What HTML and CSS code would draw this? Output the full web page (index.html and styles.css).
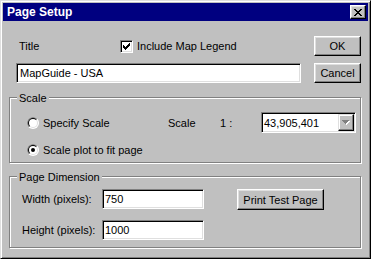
FILE: index.html
```html
<!DOCTYPE html>
<html>
<head>
<meta charset="utf-8">
<link rel="stylesheet" href="styles.css">
</head>
<body>
<div class="window">
  <div class="titlebar">
    <span class="title">Page Setup</span>
    <div class="close">
      <svg width="8" height="7" viewBox="0 0 8 7" shape-rendering="crispEdges"><path fill="#000" d="M0 0h2v1H0zM6 0h2v1H6zM1 1h2v1H1zM5 1h2v1H5zM2 2h4v1H2zM3 3h2v1H3zM2 4h4v1H2zM1 5h2v1H1zM5 5h2v1H5zM0 6h2v1H0zM6 6h2v1H6z"/></svg>
    </div>
  </div>
  <div class="content">
    <div class="top">
      <div class="top-left">
        <div class="row1">
          <span class="lbl-title">Title</span>
          <span class="check">
            <span class="checkbox">
              <svg width="7" height="7" viewBox="0 0 7 7" shape-rendering="crispEdges"><path fill="#000" d="M6 0h1v1H6zM5 1h2v1H5zM0 2h1v1H0zM4 2h3v1H4zM0 3h2v1H0zM3 3h3v1H3zM0 4h5v1H0zM1 5h3v1H1zM2 6h1v1H2z"/></svg>
            </span>
            <span>Include Map Legend</span>
          </span>
        </div>
        <div class="field">MapGuide - USA</div>
      </div>
      <div class="buttons">
        <div class="btn">OK</div>
        <div class="btn">Cancel</div>
      </div>
    </div>

    <div class="group scale">
      <span class="legend">Scale</span>
      <div class="scale-row first">
        <span class="radio-opt">
          <svg class="radio" width="12" height="12" viewBox="0 0 12 12"><defs><clipPath id="tl1"><path d="M0 0H12L0 12Z"/></clipPath></defs><circle cx="6" cy="6" r="6" fill="#fff"/><circle cx="6" cy="6" r="6" fill="#808080" clip-path="url(#tl1)"/><circle cx="6" cy="6" r="5" fill="#dfdfdf"/><circle cx="6" cy="6" r="5" fill="#000" clip-path="url(#tl1)"/><circle cx="6" cy="6" r="4" fill="#fff"/></svg>
          <span>Specify Scale</span>
        </span>
        <span>Scale</span>
        <span>1 :</span>
        <div class="combo">
          <span class="combo-text">43,905,401</span>
          <span class="drop">
            <svg width="8" height="5" viewBox="0 0 8 5" shape-rendering="crispEdges"><path fill="#fff" d="M1 1h7v1H1zM2 2h5v1H2zM3 3h3v1H3zM4 4h1v1H4z"/><path fill="#808080" d="M0 0h7v1H0zM1 1h5v1H1zM2 2h3v1H2zM3 3h1v1H3z"/></svg>
          </span>
        </div>
      </div>
      <div class="scale-row second">
        <span class="radio-opt">
          <svg class="radio" width="12" height="12" viewBox="0 0 12 12"><defs><clipPath id="tl2"><path d="M0 0H12L0 12Z"/></clipPath></defs><circle cx="6" cy="6" r="6" fill="#fff"/><circle cx="6" cy="6" r="6" fill="#808080" clip-path="url(#tl2)"/><circle cx="6" cy="6" r="5" fill="#dfdfdf"/><circle cx="6" cy="6" r="5" fill="#000" clip-path="url(#tl2)"/><circle cx="6" cy="6" r="4" fill="#fff"/><circle cx="6" cy="6" r="2" fill="#000"/></svg>
          <span>Scale plot to fit page</span>
        </span>
      </div>
    </div>

    <div class="group dim">
      <span class="legend">Page Dimension</span>
      <div class="dim-row first">
        <span>Width (pixels):</span>
        <div class="field small">750</div>
        <span></span>
        <div class="btn wide">Print Test Page</div>
      </div>
      <div class="dim-row second">
        <span>Height (pixels):</span>
        <div class="field small">1000</div>
      </div>
    </div>
  </div>
</div>
</body>
</html>
```

FILE: styles.css
```css
* { box-sizing: border-box; }

body {
  margin: 0;
  background: #c0c0c0;
  font: 11px "Liberation Sans", Arial, sans-serif;
  color: #000;
}

.window {
  width: 371px;
  height: 259px;
  background: #c0c0c0;
  border: 1px solid;
  border-color: #dfdfdf #000 #000 #dfdfdf;
  box-shadow: inset 1px 1px #fff, inset -1px -1px #808080;
  padding: 2px;
  display: flex;
  flex-direction: column;
}

.titlebar {
  height: 18px;
  flex: none;
  background: #000080;
  display: flex;
  align-items: center;
  justify-content: space-between;
  padding: 0 2px 0 4px;
}

.title {
  color: #fff;
  font-weight: bold;
  font-size: 12px;
  line-height: 14px;
}

.close {
  width: 16px;
  height: 14px;
  background: #c0c0c0;
  border: 1px solid;
  border-color: #fff #000 #000 #fff;
  box-shadow: inset -1px -1px #808080, inset 1px 1px #dfdfdf;
  display: flex;
  align-items: center;
  justify-content: center;
  padding-right: 1px;
}

.close svg { display: block; }

.content {
  padding: 15px 7px 0 6px;
  display: flex;
  flex-direction: column;
}

.top {
  display: flex;
  gap: 13px;
  padding-left: 7px;
}

.top-left {
  width: 285px;
  display: flex;
  flex-direction: column;
  gap: 7px;
}

.row1 {
  height: 20px;
  display: flex;
  align-items: center;
}

.lbl-title {
  width: 104px;
  padding-left: 3px;
}

.check {
  display: flex;
  align-items: center;
  gap: 4px;
}

.checkbox {
  width: 13px;
  height: 13px;
  background: #fff;
  border: 1px solid;
  border-color: #808080 #fff #fff #808080;
  box-shadow: inset 1px 1px #000, inset -1px -1px #dfdfdf;
  display: flex;
  padding: 2px 0 0 2px;
}

.checkbox svg { display: block; }

.field {
  height: 20px;
  background: #fff;
  border: 1px solid;
  border-color: #808080 #fff #fff #808080;
  box-shadow: inset 1px 1px #000, inset -1px -1px #dfdfdf;
  padding: 0 2px 0 3px;
  display: flex;
  align-items: center;
}

.field.small {
  width: 102px;
  padding-left: 2px;
}

.buttons {
  display: flex;
  flex-direction: column;
  gap: 7px;
}

.btn {
  width: 47px;
  height: 20px;
  background: #c0c0c0;
  border: 1px solid;
  border-color: #fff #000 #000 #fff;
  box-shadow: inset -1px -1px #808080, inset 1px 1px #dfdfdf;
  display: flex;
  align-items: center;
  justify-content: center;
}

.btn.wide {
  width: 87px;
  height: 21px;
}

.group {
  border: 1px solid #808080;
  box-shadow: inset 1px 1px #fff, 1px 1px #fff;
  display: flex;
  flex-direction: column;
}

.scale {
  margin-top: 14px;
  height: 66px;
}

.dim {
  margin-top: 13px;
  height: 72px;
}

.legend {
  align-self: flex-start;
  margin: -6px 0 0 7px;
  padding: 0 2px;
  background: #c0c0c0;
  line-height: 13px;
}

.scale-row {
  height: 21px;
  display: grid;
  grid-template-columns: 141px 52px 41px 95px;
  align-items: center;
  padding-left: 17px;
}

.scale-row.first { margin-top: 7px; }
.scale-row.second { margin-top: 6px; }

.radio-opt {
  display: flex;
  align-items: center;
  gap: 4px;
}

.radio { display: block; flex: none; }

.combo {
  height: 21px;
  background: #fff;
  border: 1px solid;
  border-color: #808080 #fff #fff #808080;
  box-shadow: inset 1px 1px #000, inset -1px -1px #dfdfdf;
  padding: 1px;
  display: flex;
  align-items: center;
}

.combo-text {
  flex: 1;
  padding-left: 1px;
}

.drop {
  width: 16px;
  height: 17px;
  background: #c0c0c0;
  border: 1px solid;
  border-color: #dfdfdf #000 #000 #dfdfdf;
  box-shadow: inset -1px -1px #808080, inset 1px 1px #fff;
  display: flex;
  align-items: center;
  justify-content: center;
}

.drop svg { display: block; }

.dim-row {
  display: grid;
  grid-template-columns: 80px 102px 33px 87px;
  align-items: start;
  padding-left: 12px;
}

.dim-row > span:first-child {
  line-height: 20px;
}

.dim-row.first { margin-top: 5px; }
.dim-row.second { margin-top: 10px; }
```
